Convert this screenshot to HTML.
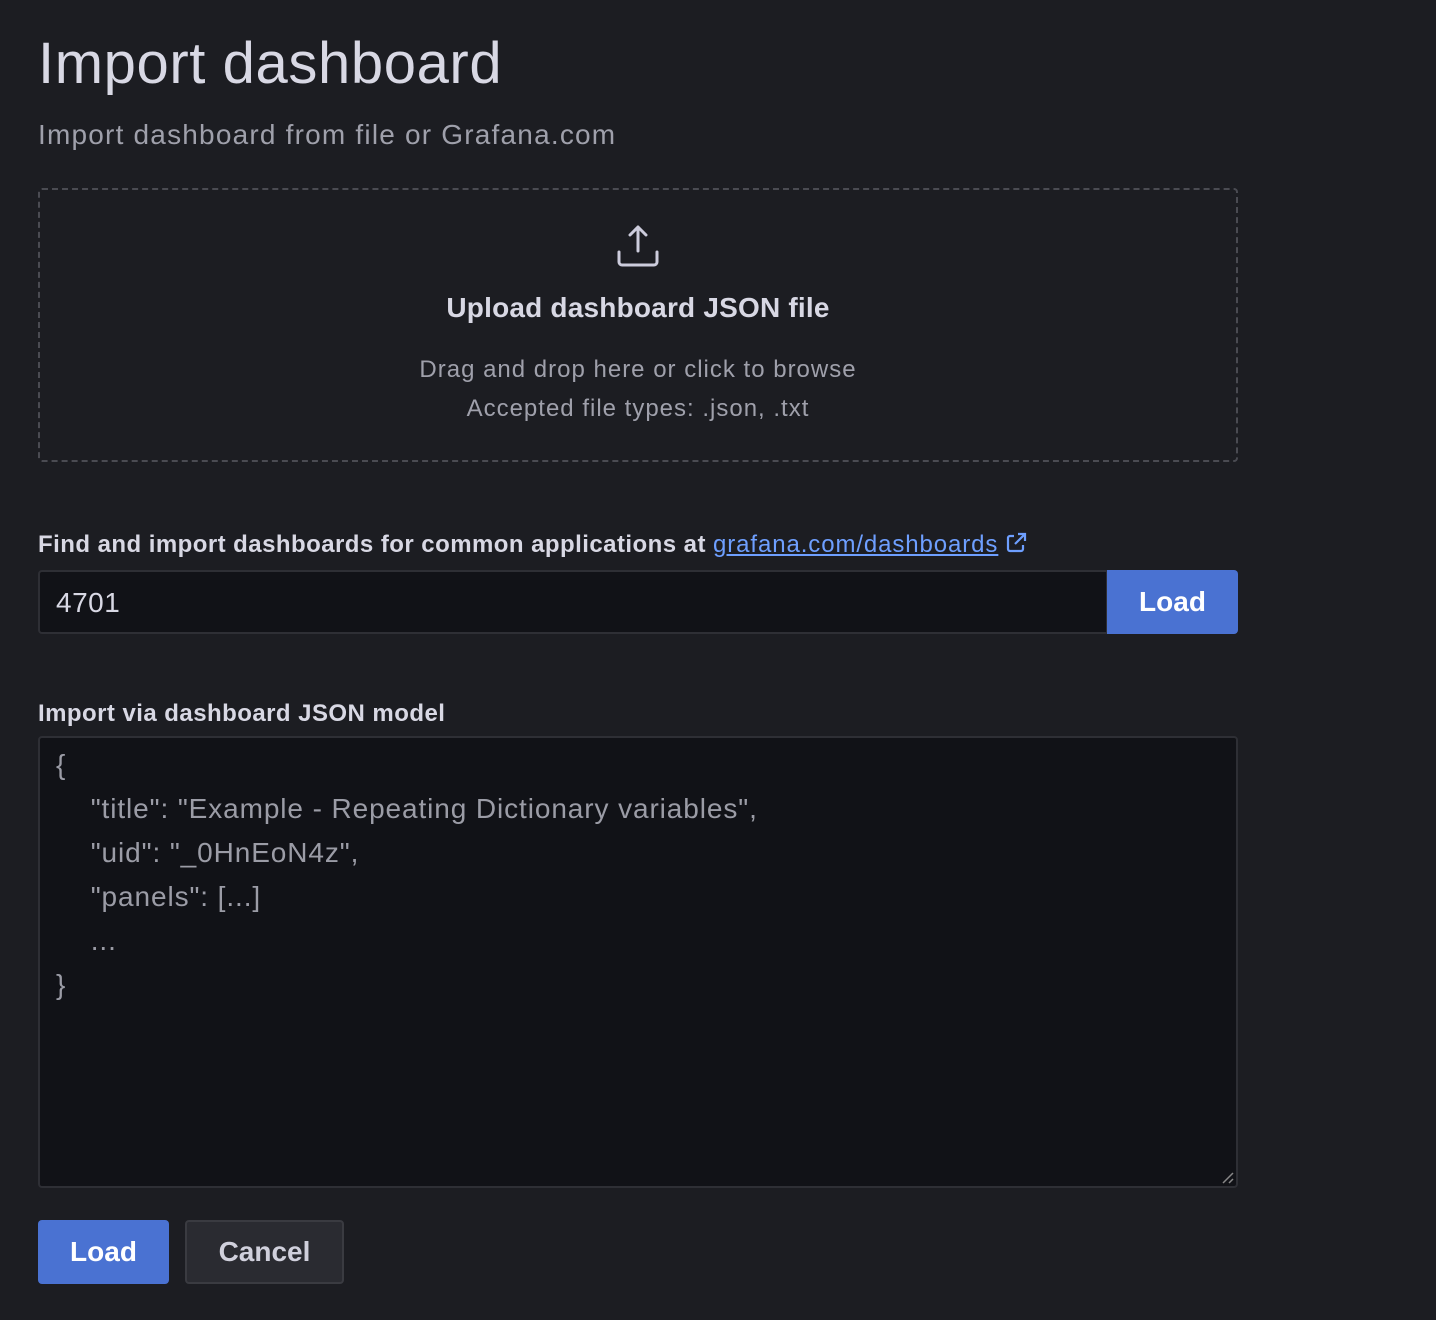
<!DOCTYPE html>
<html><head><style>
*{box-sizing:border-box;margin:0;padding:0}
body{width:1436px;height:1320px;background:#1c1d22;font-family:"Liberation Sans",sans-serif;color:#ccccdc;position:relative;overflow:hidden}
.a{position:absolute;white-space:nowrap}
h1{position:absolute;left:38px;top:30px;font-size:58px;font-weight:400;color:#d8d8e4;letter-spacing:0.6px}
.sub{left:38px;top:119px;font-size:28px;color:#9fa0ab;letter-spacing:1.2px}
.drop{position:absolute;left:38px;top:188px;width:1200px;height:274px;border:2px dashed #4a4b52;border-radius:4px}
.c{text-align:center}
.lbl{font-size:24px;font-weight:700;color:#d8d8e4;letter-spacing:0.45px}
.inp{position:absolute;left:38px;top:570px;width:1070px;height:64px;background:#111217;border:2px solid #2e2f35;border-radius:4px 0 0 4px}
.btn{position:absolute;background:#4a72d2;color:#fff;font-size:28px;font-weight:700;text-align:center;border-radius:4px}
.ta{position:absolute;left:38px;top:736px;width:1200px;height:452px;background:#111217;border:2px solid #2e2f35;border-radius:4px}
.j{left:56px;font-size:28px;color:#9b9ca6;line-height:44px;letter-spacing:0.9px}
</style></head><body>
<h1>Import dashboard</h1>
<div class="a sub">Import dashboard from file or Grafana.com</div>
<div class="drop"></div>
<svg class="a" style="left:614px;top:222px" width="48" height="48" viewBox="0 0 48 48" fill="none" stroke="#ccccdc" stroke-width="3" stroke-linecap="round" stroke-linejoin="round"><path d="M24 29V5M16 13l8-8 8 8M5 30v10a3 3 0 0 0 3 3h32a3 3 0 0 0 3-3V30"/></svg>
<div class="a c" style="left:38px;width:1200px;top:292px;font-size:28px;font-weight:700;color:#d8d8e4;letter-spacing:0.2px">Upload dashboard JSON file</div>
<div class="a c" style="left:38px;width:1200px;top:356px;font-size:24px;color:#9fa0ab;letter-spacing:1px">Drag and drop here or click to browse</div>
<div class="a c" style="left:38px;width:1200px;top:395px;font-size:24px;color:#9fa0ab;letter-spacing:1px">Accepted file types: .json, .txt</div>
<div class="a lbl" style="left:38px;top:531px">Find and import dashboards for common applications at <span style="color:#6e9fff;font-weight:400;text-decoration:underline;letter-spacing:0.9px">grafana.com/dashboards</span>
<svg width="22" height="22" viewBox="0 0 22 22" fill="none" stroke="#6e9fff" stroke-width="2.2" style="vertical-align:-2px"><path d="M9 4H5a2 2 0 0 0-2 2v11a2 2 0 0 0 2 2h11a2 2 0 0 0 2-2v-4M13 2h7v7M20 2L10 12"/></svg></div>
<div class="inp"></div>
<div class="a" style="left:56px;top:587px;font-size:28px;color:#d8d8e4;letter-spacing:0.5px">4701</div>
<div class="btn" style="left:1107px;top:570px;width:131px;height:64px;line-height:64px;border-radius:0 4px 4px 0">Load</div>
<div class="a lbl" style="left:38px;top:700px">Import via dashboard JSON model</div>
<div class="ta"></div>
<div class="a j" style="top:743px">{<br>&nbsp;&nbsp;&nbsp;&nbsp;"title": "Example - Repeating Dictionary variables",<br>&nbsp;&nbsp;&nbsp;&nbsp;"uid": "_0HnEoN4z",<br>&nbsp;&nbsp;&nbsp;&nbsp;"panels": [...]<br>&nbsp;&nbsp;&nbsp;&nbsp;...<br>}</div>
<svg class="a" style="left:1220px;top:1170px" width="16" height="16" stroke="#888" stroke-width="1.5"><path d="M3 13L13 3M9 13l4-4"/></svg>
<div class="btn" style="left:38px;top:1220px;width:131px;height:64px;line-height:64px">Load</div>
<div class="btn" style="left:185px;top:1220px;width:159px;height:64px;line-height:60px;background:#2a2b31;border:2px solid #3a3b41;color:#d0d0dc">Cancel</div>
</body></html>
